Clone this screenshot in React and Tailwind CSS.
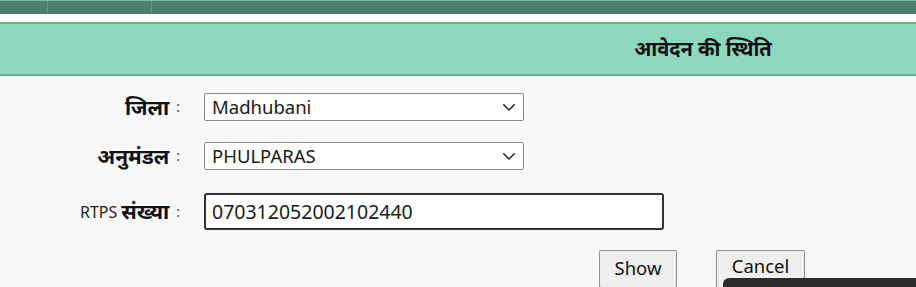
import React from 'react';

const ChevronDown = () => (
  <svg width="18" height="18" viewBox="0 0 24 24" fill="none" stroke="#222" strokeWidth="2" strokeLinecap="round" strokeLinejoin="round">
    <path d="M5 9l7 7 7-7" />
  </svg>
);

const SelectBox = ({ value }) => (
  <div className="flex h-[28px] w-[320px] items-center justify-between rounded-[2px] border border-[#8a8a8a] bg-white pl-[7px] pr-[5px] text-[18.5px] leading-none text-[#1a1a1a]">
    <span>{value}</span>
    <ChevronDown />
  </div>
);

const Label = ({ children }) => (
  <div className="flex w-[192px] items-center justify-end pr-[12px] leading-none">
    {children}
    <span className="ml-[7px] text-[14px] text-[#444]">:</span>
  </div>
);

export default function App() {
  return (
    <div
      className="relative h-[287px] w-[916px] overflow-hidden bg-[#f8f8f8]"
      style={{ fontFamily: '"Noto Sans", "Noto Sans Devanagari", Lato, sans-serif' }}
    >
      <div className="flex h-[14px] border-t border-[#8fb3a6] bg-[#4b7f6f]">
        <div className="w-[48px] border-r border-[#6a9585]" />
        <div className="w-[104px] border-r border-[#6a9585]" />
      </div>
      <div className="h-[8px] bg-white" />
      <div className="flex h-[54px] items-center border-y-2 border-[#5bb98e] bg-[#8dd7bf]">
        <div className="w-[600px]" />
        <div className="flex-1 pr-[110px] text-center text-[20px] font-bold leading-none text-[#111]">आवेदन की स्थिति</div>
      </div>

      <div className="mt-[17px] flex h-[28px] items-center">
        <Label>
          <span className="text-[21px] font-bold text-[#111]">जिला</span>
        </Label>
        <div className="ml-[12px]">
          <SelectBox value="Madhubani" />
        </div>
      </div>

      <div className="mt-[21px] flex h-[28px] items-center">
        <Label>
          <span className="text-[21px] font-bold text-[#111]">अनुमंडल</span>
        </Label>
        <div className="ml-[12px]">
          <SelectBox value="PHULPARAS" />
        </div>
      </div>

      <div className="mt-[23px] flex h-[37px] items-center">
        <Label>
          <span className="text-[16px] text-[#222]">RTPS</span>
          <span className="ml-[4px] text-[21px] font-bold text-[#111]">संख्या</span>
        </Label>
        <div className="ml-[12px] flex h-[37px] w-[460px] items-center rounded-[3px] border-2 border-[#333] bg-white pl-[6px] text-[19.5px] leading-none text-[#1a1a1a]">
          070312052002102440
        </div>
      </div>

      <div className="mt-[20px] flex h-[38px]">
        <div className="w-[599px]" />
        <button className="h-[38px] w-[78px] rounded-[2px] border border-[#8f8f8f] bg-[#efefef] pb-[2px] text-[18.5px] leading-none text-[#111]">
          Show
        </button>
        <button className="ml-[39px] h-[38px] w-[89px] rounded-[2px] border border-[#8f8f8f] bg-[#efefef] pb-[6px] text-[18.5px] leading-none text-[#111]">
          Cancel
        </button>
      </div>

      <div className="absolute left-[723px] top-[278px] h-[20px] w-[200px] rounded-tl-[6px] bg-[#2b2b2b]" />
    </div>
  );
}
